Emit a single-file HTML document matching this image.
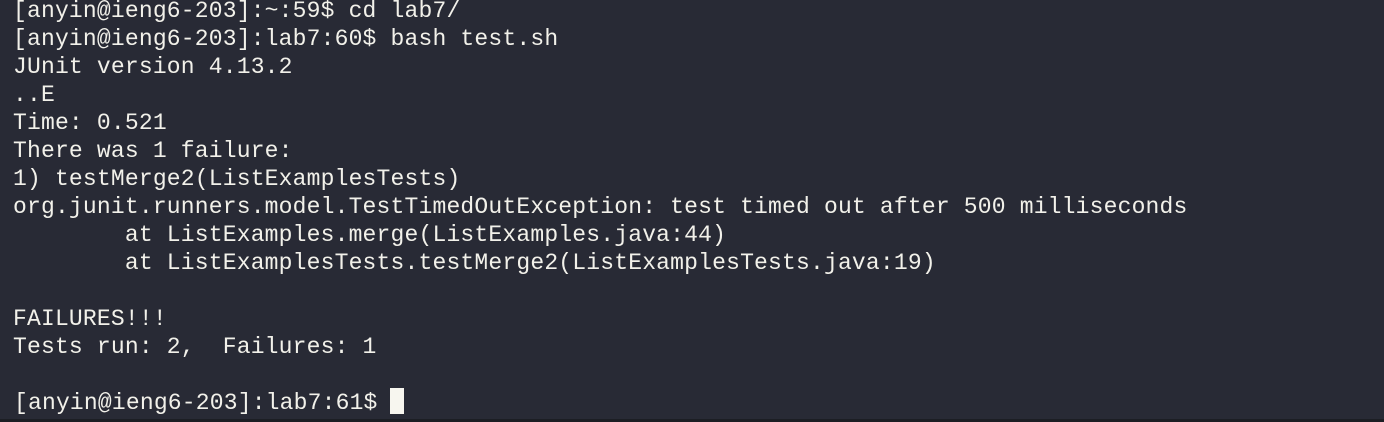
<!DOCTYPE html>
<html><head><meta charset="utf-8"><style>
html,body{margin:0;padding:0;width:1384px;height:422px;overflow:hidden;background:#282a35;}
pre{position:absolute;left:13px;top:-3px;margin:0;font-family:"Liberation Mono","DejaVu Sans Mono",monospace;font-size:23px;letter-spacing:0.18px;line-height:28px;color:#f2f1ea;}
.cur{position:absolute;left:390px;top:388px;width:14px;height:26px;background:#f7f6ef;}
.bot{position:absolute;left:0;top:419px;width:1384px;height:3px;background:#1c1e24;}
</style></head><body>
<pre>[anyin@ieng6-203]:~:59$ cd lab7/
[anyin@ieng6-203]:lab7:60$ bash test.sh
JUnit version 4.13.2
..E
Time: 0.521
There was 1 failure:
1) testMerge2(ListExamplesTests)
org.junit.runners.model.TestTimedOutException: test timed out after 500 milliseconds
        at ListExamples.merge(ListExamples.java:44)
        at ListExamplesTests.testMerge2(ListExamplesTests.java:19)

FAILURES!!!
Tests run: 2,  Failures: 1

<span style="position:relative;left:1px">[anyin@ieng6-203]:lab7:61$ </span></pre>
<div class="cur"></div>
<div class="bot"></div>
</body></html>
